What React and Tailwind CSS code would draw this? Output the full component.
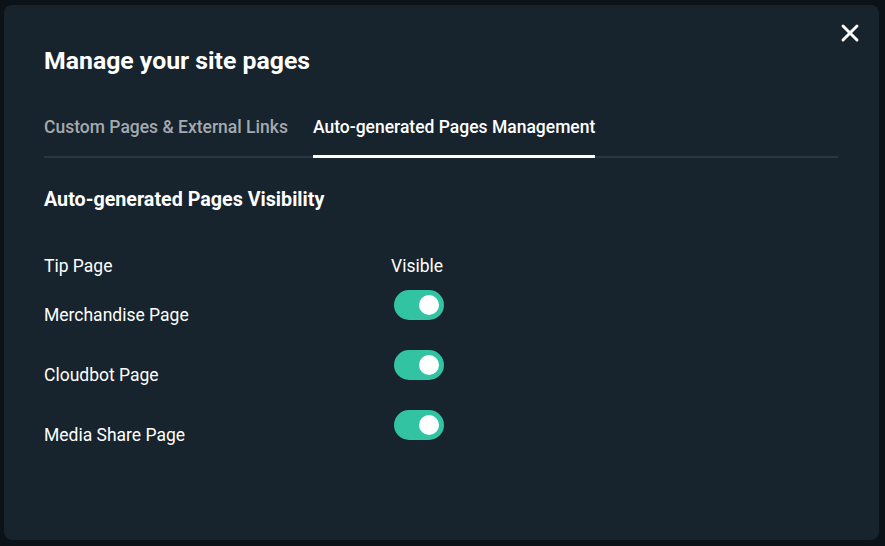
import { X } from 'lucide-react';

const pages = ['Merchandise Page', 'Cloudbot Page', 'Media Share Page'];

function Toggle() {
  return (
    <div className="w-[50px] h-[30px] rounded-full bg-[#31c3a2] flex items-center justify-end px-[5px]">
      <div className="w-[20px] h-[20px] rounded-full bg-white" />
    </div>
  );
}

export default function App() {
  return (
    <div className="w-[885px] h-[546px] bg-[#0b1318] pt-[5px] pl-[4px] font-['Roboto',sans-serif]">
      <div className="relative w-[875px] h-[535px] rounded-lg bg-[#17232d] pl-[40px] pr-[41px] pt-[40px]">
        <button className="absolute left-[832px] top-[14px] text-white">
          <X className="w-[28px] h-[28px]" strokeWidth={2.5} />
        </button>
        <h1 className="text-white text-[24.8px] leading-[32px] font-bold">Manage your site pages</h1>
        <div className="mt-[38px] flex gap-[25px] border-b-2 border-[#2a3640]">
          <div className="text-[#a3aaaf] text-[17.5px] leading-[24px] font-medium pb-[17px]">Custom Pages &amp; External Links</div>
          <div className="text-white text-[17.5px] leading-[24px] font-medium pb-[16px] border-b-[3px] border-white -mb-[2px]">Auto-generated Pages Management</div>
        </div>
        <h2 className="mt-[29px] text-white text-[19.7px] leading-[26px] font-bold">Auto-generated Pages Visibility</h2>
        <div className="mt-[41px] grid grid-cols-[347px_auto] items-center">
          <div className="text-white text-[17.5px] leading-[24px]">Tip Page</div>
          <div className="text-white text-[17.5px] leading-[24px]">Visible</div>
        </div>
        <div className="flex flex-col">
          {pages.map((p) => (
            <div key={p} className="grid grid-cols-[350px_auto] h-[60px] items-start">
              <div className="text-white text-[17.5px] leading-[24px] pt-[25px]">{p}</div>
              <div className="pt-[12px]">
                <Toggle />
              </div>
            </div>
          ))}
        </div>
      </div>
    </div>
  );
}
